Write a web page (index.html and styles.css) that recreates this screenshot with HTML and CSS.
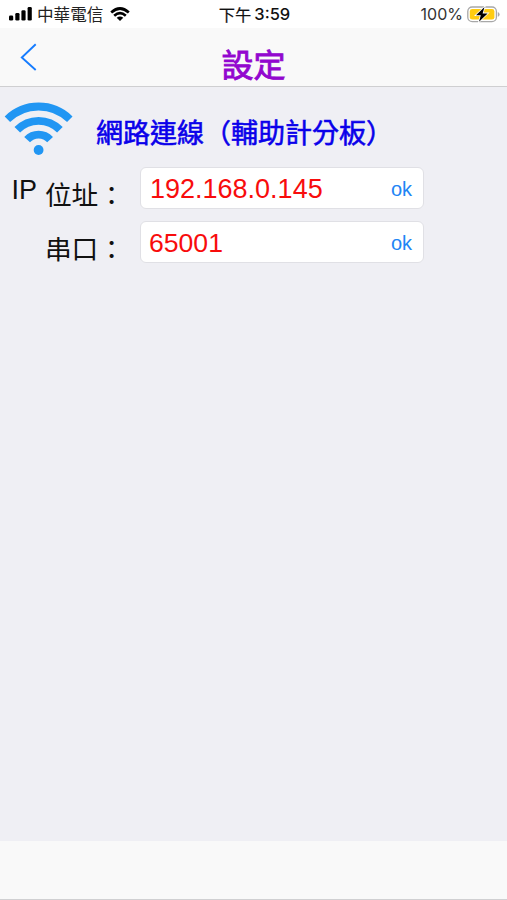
FILE: index.html
```html
<!DOCTYPE html>
<html lang="zh-Hant">
<head>
<meta charset="utf-8">
<title>設定</title>
<link rel="stylesheet" href="styles.css">
</head>
<body>
<div class="screen">
  <header class="status">
    <div class="carrier">
      <svg class="signal" width="24" height="14" viewBox="0 0 24 14"><rect x="0" y="8.5" width="4.2" height="5" rx="1.3"/><rect x="6.3" y="6" width="4.2" height="7.5" rx="1.3"/><rect x="12.4" y="3.3" width="4.2" height="10.2" rx="1.3"/><rect x="18.6" y="0" width="4.2" height="13.5" rx="1.3"/></svg>
      <span class="carrier-name">中華電信</span>
      <svg class="signal-wifi" width="20" height="14" viewBox="0 0 20 14"><path d="M1.2 5.4Q10-2.4 18.8 5.4M4.2 8.7Q10 3.6 15.8 8.7" fill="none" stroke="#000" stroke-width="2.7"/><path d="M6.7 10.8Q10 8.1 13.3 10.8L10 14Z"/></svg>
    </div>
    <div class="clock"><span class="period">下午</span><span class="time">3:59</span></div>
    <div class="power">
      <span>100%</span>
      <svg width="33" height="17" viewBox="0 0 33 17"><rect x=".8" y="1" width="28.6" height="14.6" rx="4.4" fill="#fff" stroke="#a8a8a8" stroke-width="1.3"/><rect x="2.8" y="3" width="24.6" height="10.6" rx="2.4" fill="#fc1"/><path d="M30.8 6v4.8q1.8-.7 1.8-2.4T30.8 6Z" fill="#a8a8a8"/><path d="M17.5 1.1 9 9.2h4.8L12 15.7l8.6-8.3h-5Z" stroke="#fff" stroke-width="1.6" paint-order="stroke"/></svg>
    </div>
  </header>
  <nav class="navbar">
    <svg class="back" width="18" height="28" viewBox="0 0 18 28"><path d="M15.7 1.2 1.8 14.5 15.7 27" fill="none" stroke="#167cff" stroke-width="1.9"/></svg>
    <h1>設定</h1>
  </nav>
  <main>
    <div class="section">
      <svg class="wifi" width="70" height="54" viewBox="0 0 70 54"><g fill="none" stroke="#2196f3"><path d="M3.4 18.2A44.7 44.7 0 0 1 65.8 18.2" stroke-width="7.8"/><path d="M13.3 28.8A29.7 29.7 0 0 1 55.9 28.8" stroke-width="7.8"/><path d="M23.1 38.7A15.5 15.5 0 0 1 46.1 38.7" stroke-width="7.8"/></g><circle cx="34.6" cy="49" r="4.9" fill="#2196f3"/></svg>
      <h2>網路連線（輔助計分板）</h2>
    </div>
    <div class="row">
      <label><span class="latin">IP</span><span class="cjk">位址：</span></label>
      <div class="field"><span class="value">192.168.0.145</span><span class="ok">ok</span></div>
    </div>
    <div class="row">
      <label><span class="cjk">串口：</span></label>
      <div class="field"><span class="value port">65001</span><span class="ok">ok</span></div>
    </div>
  </main>
  <footer></footer>
</div>
</body>
</html>
```
FILE: styles.css
```css
* { box-sizing: border-box; }
body { margin: 0; font-family: "Liberation Sans", "Noto Sans CJK TC", sans-serif; color: #111; }
h1, h2 { margin: 0; font-family: "Noto Sans CJK TC", sans-serif; font-weight: 400; }
svg { display: block; flex: none; }
.screen { width: 507px; height: 900px; display: flex; flex-direction: column; background: #efeff4; overflow: hidden; }
.status { height: 28px; background: #fff; display: grid; grid-template-columns: 1fr auto 1fr; align-items: center; padding: 0 7px 0 9px; font: 16.5px/28px Inter, "Noto Sans CJK TC", sans-serif; }
.carrier { display: flex; align-items: center; color: #222; }
.carrier-name { margin-left: 4px; font: 16.6px/28px "Noto Sans CJK TC", sans-serif; }
.signal-wifi { margin-left: 7px; }
.clock { display: flex; align-items: center; gap: 3px; font-weight: 500; }
.period { font: 400 16.3px/28px "Noto Sans CJK TC", sans-serif; -webkit-text-stroke: .2px; }
.power { display: flex; align-items: center; justify-content: flex-end; gap: 4px; color: #333; font-size: 16px; }
.navbar { height: 59px; background: #f9f9f9; border-bottom: 1px solid #cfcfd1; display: grid; grid-template-columns: 60px 1fr 60px; }
.back { margin: 15px 0 0 20px; }
h1 { text-align: center; font-size: 32px; line-height: 70px; color: #9307cf; -webkit-text-stroke: .9px; }
main { flex: 1; }
.section { height: 80px; display: flex; padding-left: 4px; }
.wifi { margin-top: 14px; }
h2 { margin: 25px 0 0 22px; font-size: 27px; line-height: 40px; color: #0a00ea; white-space: nowrap; -webkit-text-stroke: .6px; }
.row { display: flex; height: 42px; margin-bottom: 12px; }
label { width: 140px; display: flex; justify-content: flex-end; padding-right: 15px; line-height: 42px; }
.latin { font-size: 27px; margin-right: 8px; line-height: 46px; }
.cjk { font: 26.7px/54px "Noto Sans CJK TC", sans-serif; }
.field { width: 284px; height: 42px; background: #fff; border: 1px solid #e0e0e5; border-radius: 6px; display: flex; justify-content: space-between; padding: 0 11px 0 9px; line-height: 42px; }
.value { font-size: 27px; color: #f80c0c; }
.port { margin-left: -1px; font-size: 26.6px; }
.ok { font-size: 20px; color: #2185f5; }
footer { height: 59px; background: #f9f9f9; border-bottom: 1px solid #d0d0d2; }
```
